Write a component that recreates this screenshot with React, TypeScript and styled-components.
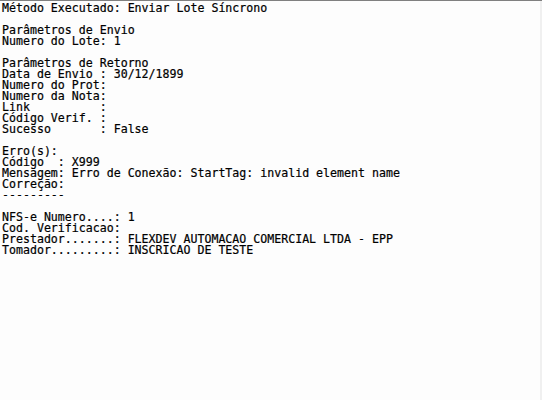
import React from "react";
import styled, { createGlobalStyle } from "styled-components";

const Global = createGlobalStyle`
  html, body { margin: 0; padding: 0; background: #fdfdfd; }
  #root { width: 542px; height: 400px; }
`;

const Frame = styled.div`
  width: 542px;
  height: 400px;
  box-sizing: border-box;
  border-top: 1px solid #808080;
  background: #fdfdfd;
  display: flex;
  overflow: hidden;
`;

const Memo = styled.pre`
  flex: 1;
  margin: 0;
  padding: 2px 0 0 2px;
  font-family: "DejaVu Sans Mono", "Liberation Mono", monospace;
  font-size: 11.6px;
  line-height: 11px;
  color: #000;
  -webkit-text-stroke: 0.2px #000;
  white-space: pre;
`;

const Edge = styled.div`
  width: 2px;
  background: #f0f0f0;
`;

const lines = [
  "Método Executado: Enviar Lote Síncrono",
  "",
  "Parâmetros de Envio",
  "Numero do Lote: 1",
  "",
  "Parâmetros de Retorno",
  "Data de Envio : 30/12/1899",
  "Numero do Prot:",
  "Numero da Nota:",
  "Link          :",
  "Código Verif. :",
  "Sucesso       : False",
  "",
  "Erro(s):",
  "Código  : X999",
  "Mensagem: Erro de Conexão: StartTag: invalid element name",
  "Correção:",
  "---------",
  "",
  "NFS-e Numero....: 1",
  "Cod. Verificacao:",
  "Prestador.......: FLEXDEV AUTOMACAO COMERCIAL LTDA - EPP",
  "Tomador.........: INSCRICAO DE TESTE",
];

export default function App() {
  return (
    <>
      <Global />
      <Frame>
        <Memo>{lines.join("\n")}</Memo>
        <Edge />
      </Frame>
    </>
  );
}
